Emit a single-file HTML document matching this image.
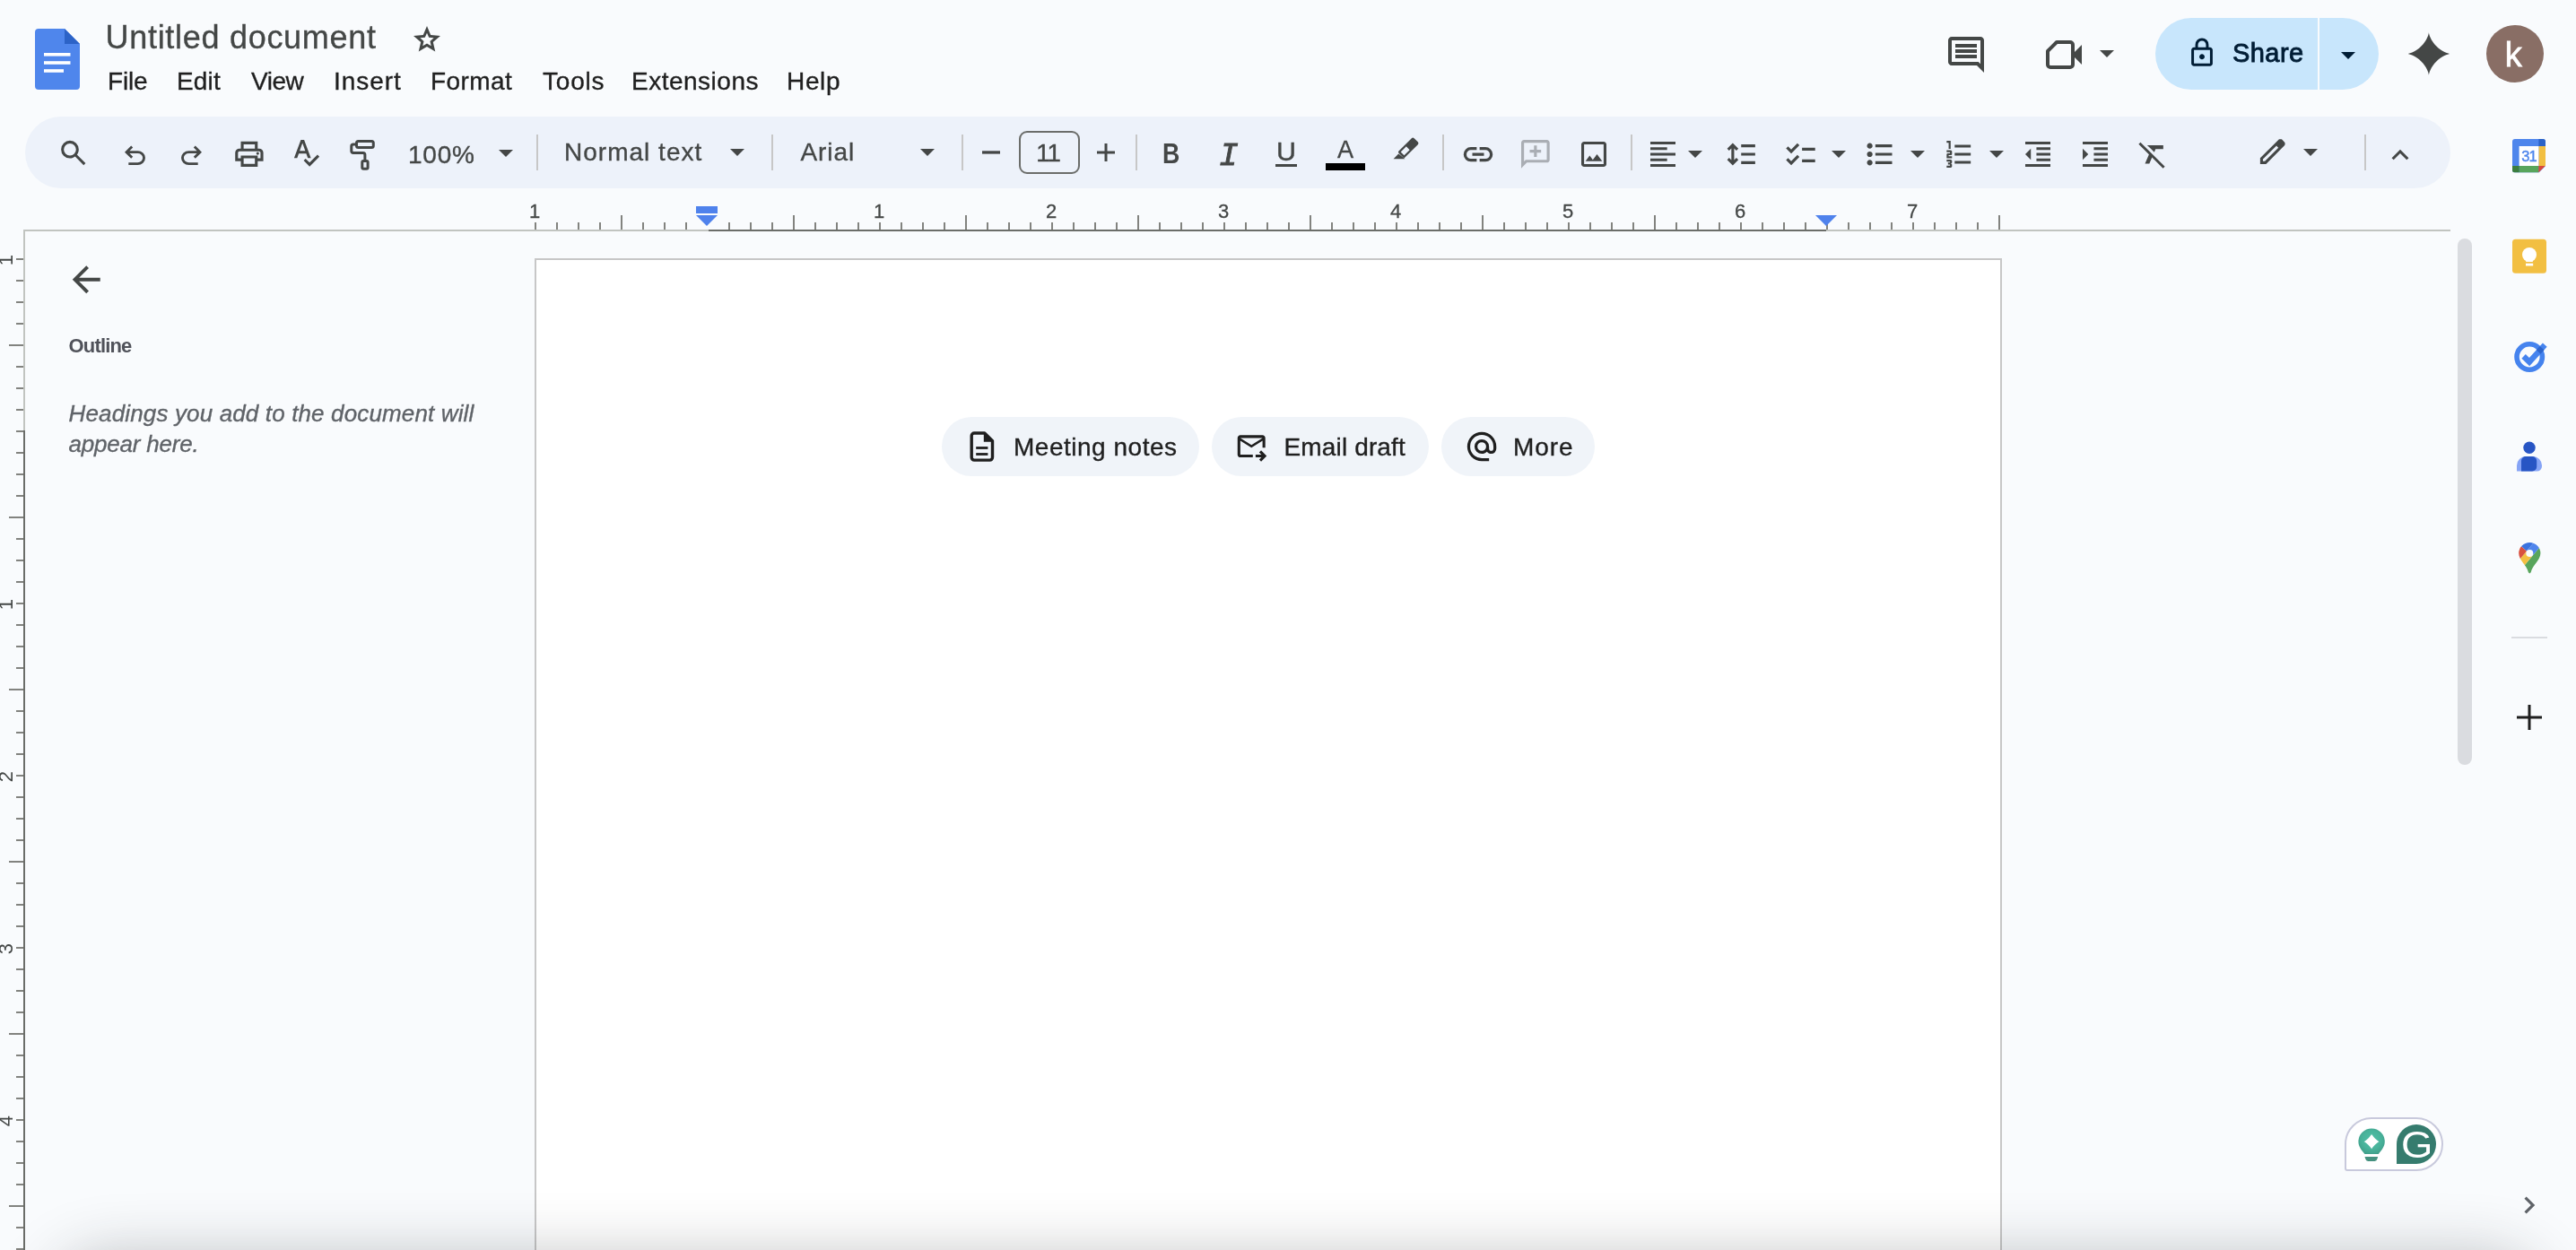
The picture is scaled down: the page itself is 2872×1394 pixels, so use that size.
<!DOCTYPE html>
<html lang="en">
<head>
<meta charset="utf-8">
<title>Untitled document - Google Docs</title>
<style>
html,body{margin:0;padding:0;}
html{background:#f9fbfd;overflow:hidden;}
body{width:2872px;height:1394px;overflow:hidden;background:#f9fbfd;position:relative;font-family:"Liberation Sans",sans-serif;}
.abs{position:absolute;}
.t{position:absolute;white-space:nowrap;line-height:1;}
#toolbar{left:28px;top:130px;width:2704px;height:80px;border-radius:40px;background:#edf2fa;}
.sep{position:absolute;width:2px;top:150px;height:40px;background:#c7c7c7;}
#page{left:596px;top:288px;width:1632px;height:1200px;background:#fff;border:2px solid #c7c7c7;}
.chip{position:absolute;top:465px;height:66px;border-radius:33px;background:#f0f4f9;}
#share{left:2403px;top:20px;width:249px;height:80px;border-radius:40px;background:#c8e6fc;}
#sharediv{left:2584px;top:20px;width:2px;height:80px;background:#f9fbfd;}
#avatar{left:2772px;top:28px;width:64px;height:64px;border-radius:50%;background:#896e65;}
#fsbox{left:1136px;top:146px;width:64px;height:44px;border:2px solid #6b6d6a;border-radius:9px;}
#scroll{left:2740px;top:266px;width:16px;height:587px;border-radius:8px;background:#dadce0;}
#gram{left:2614px;top:1246px;width:106px;height:56px;border:2px solid #c8c9dc;background:#fff;border-radius:30px 30px 30px 3px;}
#shadow{left:100px;top:1440px;width:2692px;height:100px;border-radius:20px;box-shadow:0 0 70px 36px rgba(30,32,36,0.30);}
#txt,#rul{position:absolute;left:0;top:0;width:2872px;height:1394px;will-change:transform;}
svg{position:absolute;left:0;top:0;overflow:visible;}
</style>
</head>
<body>
<div class="abs" id="toolbar"></div>
<div class="sep" style="left:598px"></div>
<div class="sep" style="left:860px"></div>
<div class="sep" style="left:1072px"></div>
<div class="sep" style="left:1266px"></div>
<div class="sep" style="left:1608px"></div>
<div class="sep" style="left:1818px"></div>
<div class="sep" style="left:2636px"></div>
<div class="abs" id="fsbox"></div>
<div class="abs" id="page"></div>
<div class="chip" style="left:1050px;width:287px"></div>
<div class="chip" style="left:1351px;width:242px"></div>
<div class="chip" style="left:1607px;width:171px"></div>
<div class="abs" id="share"></div>
<div class="abs" id="sharediv"></div>
<div class="abs" id="avatar"></div>
<div class="abs" id="scroll"></div>
<div class="abs" id="gram"></div>
<div id="rul">
<div class="abs" style="left:26px;top:256px;width:764px;height:2px;background:#c1c4c0"></div>
<div class="abs" style="left:790px;top:256px;width:1246px;height:2px;background:#6b6d69"></div>
<div class="abs" style="left:2036px;top:256px;width:696px;height:2px;background:#c1c4c0"></div>
<div class="abs" style="left:26px;top:258px;width:2px;height:222px;background:#c1c4c0"></div>
<div class="abs" style="left:26px;top:480px;width:2px;height:914px;background:#6b6d69"></div>
<div class="abs" style="left:596px;top:248px;width:2px;height:8px;background:#82837f"></div>
<div class="abs" style="left:620px;top:248px;width:2px;height:8px;background:#82837f"></div>
<div class="abs" style="left:644px;top:248px;width:2px;height:8px;background:#82837f"></div>
<div class="abs" style="left:668px;top:248px;width:2px;height:8px;background:#82837f"></div>
<div class="abs" style="left:692px;top:240px;width:2px;height:16px;background:#82837f"></div>
<div class="abs" style="left:716px;top:248px;width:2px;height:8px;background:#82837f"></div>
<div class="abs" style="left:740px;top:248px;width:2px;height:8px;background:#82837f"></div>
<div class="abs" style="left:764px;top:248px;width:2px;height:8px;background:#82837f"></div>
<div class="abs" style="left:812px;top:248px;width:2px;height:8px;background:#82837f"></div>
<div class="abs" style="left:836px;top:248px;width:2px;height:8px;background:#82837f"></div>
<div class="abs" style="left:860px;top:248px;width:2px;height:8px;background:#82837f"></div>
<div class="abs" style="left:884px;top:240px;width:2px;height:16px;background:#82837f"></div>
<div class="abs" style="left:908px;top:248px;width:2px;height:8px;background:#82837f"></div>
<div class="abs" style="left:932px;top:248px;width:2px;height:8px;background:#82837f"></div>
<div class="abs" style="left:956px;top:248px;width:2px;height:8px;background:#82837f"></div>
<div class="abs" style="left:980px;top:248px;width:2px;height:8px;background:#82837f"></div>
<div class="abs" style="left:1004px;top:248px;width:2px;height:8px;background:#82837f"></div>
<div class="abs" style="left:1028px;top:248px;width:2px;height:8px;background:#82837f"></div>
<div class="abs" style="left:1052px;top:248px;width:2px;height:8px;background:#82837f"></div>
<div class="abs" style="left:1076px;top:240px;width:2px;height:16px;background:#82837f"></div>
<div class="abs" style="left:1100px;top:248px;width:2px;height:8px;background:#82837f"></div>
<div class="abs" style="left:1124px;top:248px;width:2px;height:8px;background:#82837f"></div>
<div class="abs" style="left:1148px;top:248px;width:2px;height:8px;background:#82837f"></div>
<div class="abs" style="left:1172px;top:248px;width:2px;height:8px;background:#82837f"></div>
<div class="abs" style="left:1196px;top:248px;width:2px;height:8px;background:#82837f"></div>
<div class="abs" style="left:1220px;top:248px;width:2px;height:8px;background:#82837f"></div>
<div class="abs" style="left:1244px;top:248px;width:2px;height:8px;background:#82837f"></div>
<div class="abs" style="left:1268px;top:240px;width:2px;height:16px;background:#82837f"></div>
<div class="abs" style="left:1292px;top:248px;width:2px;height:8px;background:#82837f"></div>
<div class="abs" style="left:1316px;top:248px;width:2px;height:8px;background:#82837f"></div>
<div class="abs" style="left:1340px;top:248px;width:2px;height:8px;background:#82837f"></div>
<div class="abs" style="left:1364px;top:248px;width:2px;height:8px;background:#82837f"></div>
<div class="abs" style="left:1388px;top:248px;width:2px;height:8px;background:#82837f"></div>
<div class="abs" style="left:1412px;top:248px;width:2px;height:8px;background:#82837f"></div>
<div class="abs" style="left:1436px;top:248px;width:2px;height:8px;background:#82837f"></div>
<div class="abs" style="left:1460px;top:240px;width:2px;height:16px;background:#82837f"></div>
<div class="abs" style="left:1484px;top:248px;width:2px;height:8px;background:#82837f"></div>
<div class="abs" style="left:1508px;top:248px;width:2px;height:8px;background:#82837f"></div>
<div class="abs" style="left:1532px;top:248px;width:2px;height:8px;background:#82837f"></div>
<div class="abs" style="left:1556px;top:248px;width:2px;height:8px;background:#82837f"></div>
<div class="abs" style="left:1580px;top:248px;width:2px;height:8px;background:#82837f"></div>
<div class="abs" style="left:1604px;top:248px;width:2px;height:8px;background:#82837f"></div>
<div class="abs" style="left:1628px;top:248px;width:2px;height:8px;background:#82837f"></div>
<div class="abs" style="left:1652px;top:240px;width:2px;height:16px;background:#82837f"></div>
<div class="abs" style="left:1676px;top:248px;width:2px;height:8px;background:#82837f"></div>
<div class="abs" style="left:1700px;top:248px;width:2px;height:8px;background:#82837f"></div>
<div class="abs" style="left:1724px;top:248px;width:2px;height:8px;background:#82837f"></div>
<div class="abs" style="left:1748px;top:248px;width:2px;height:8px;background:#82837f"></div>
<div class="abs" style="left:1772px;top:248px;width:2px;height:8px;background:#82837f"></div>
<div class="abs" style="left:1796px;top:248px;width:2px;height:8px;background:#82837f"></div>
<div class="abs" style="left:1820px;top:248px;width:2px;height:8px;background:#82837f"></div>
<div class="abs" style="left:1844px;top:240px;width:2px;height:16px;background:#82837f"></div>
<div class="abs" style="left:1868px;top:248px;width:2px;height:8px;background:#82837f"></div>
<div class="abs" style="left:1892px;top:248px;width:2px;height:8px;background:#82837f"></div>
<div class="abs" style="left:1916px;top:248px;width:2px;height:8px;background:#82837f"></div>
<div class="abs" style="left:1940px;top:248px;width:2px;height:8px;background:#82837f"></div>
<div class="abs" style="left:1964px;top:248px;width:2px;height:8px;background:#82837f"></div>
<div class="abs" style="left:1988px;top:248px;width:2px;height:8px;background:#82837f"></div>
<div class="abs" style="left:2012px;top:248px;width:2px;height:8px;background:#82837f"></div>
<div class="abs" style="left:2036px;top:240px;width:2px;height:16px;background:#82837f"></div>
<div class="abs" style="left:2060px;top:248px;width:2px;height:8px;background:#82837f"></div>
<div class="abs" style="left:2084px;top:248px;width:2px;height:8px;background:#82837f"></div>
<div class="abs" style="left:2108px;top:248px;width:2px;height:8px;background:#82837f"></div>
<div class="abs" style="left:2132px;top:248px;width:2px;height:8px;background:#82837f"></div>
<div class="abs" style="left:2156px;top:248px;width:2px;height:8px;background:#82837f"></div>
<div class="abs" style="left:2180px;top:248px;width:2px;height:8px;background:#82837f"></div>
<div class="abs" style="left:2204px;top:248px;width:2px;height:8px;background:#82837f"></div>
<div class="abs" style="left:2228px;top:240px;width:2px;height:16px;background:#82837f"></div>
<div class="t" style="left:576px;top:225px;width:40px;text-align:center;font-size:22px;-webkit-text-stroke:0.3px #444746;color:#444746">1</div>
<div class="t" style="left:960px;top:225px;width:40px;text-align:center;font-size:22px;-webkit-text-stroke:0.3px #444746;color:#444746">1</div>
<div class="t" style="left:1152px;top:225px;width:40px;text-align:center;font-size:22px;-webkit-text-stroke:0.3px #444746;color:#444746">2</div>
<div class="t" style="left:1344px;top:225px;width:40px;text-align:center;font-size:22px;-webkit-text-stroke:0.3px #444746;color:#444746">3</div>
<div class="t" style="left:1536px;top:225px;width:40px;text-align:center;font-size:22px;-webkit-text-stroke:0.3px #444746;color:#444746">4</div>
<div class="t" style="left:1728px;top:225px;width:40px;text-align:center;font-size:22px;-webkit-text-stroke:0.3px #444746;color:#444746">5</div>
<div class="t" style="left:1920px;top:225px;width:40px;text-align:center;font-size:22px;-webkit-text-stroke:0.3px #444746;color:#444746">6</div>
<div class="t" style="left:2112px;top:225px;width:40px;text-align:center;font-size:22px;-webkit-text-stroke:0.3px #444746;color:#444746">7</div>
<div class="abs" style="left:18px;top:288px;width:8px;height:2px;background:#82837f"></div>
<div class="abs" style="left:18px;top:312px;width:8px;height:2px;background:#82837f"></div>
<div class="abs" style="left:18px;top:336px;width:8px;height:2px;background:#82837f"></div>
<div class="abs" style="left:18px;top:360px;width:8px;height:2px;background:#82837f"></div>
<div class="abs" style="left:10px;top:384px;width:16px;height:2px;background:#82837f"></div>
<div class="abs" style="left:18px;top:408px;width:8px;height:2px;background:#82837f"></div>
<div class="abs" style="left:18px;top:432px;width:8px;height:2px;background:#82837f"></div>
<div class="abs" style="left:18px;top:456px;width:8px;height:2px;background:#82837f"></div>
<div class="abs" style="left:18px;top:480px;width:8px;height:2px;background:#82837f"></div>
<div class="abs" style="left:18px;top:504px;width:8px;height:2px;background:#82837f"></div>
<div class="abs" style="left:18px;top:528px;width:8px;height:2px;background:#82837f"></div>
<div class="abs" style="left:18px;top:552px;width:8px;height:2px;background:#82837f"></div>
<div class="abs" style="left:10px;top:576px;width:16px;height:2px;background:#82837f"></div>
<div class="abs" style="left:18px;top:600px;width:8px;height:2px;background:#82837f"></div>
<div class="abs" style="left:18px;top:624px;width:8px;height:2px;background:#82837f"></div>
<div class="abs" style="left:18px;top:648px;width:8px;height:2px;background:#82837f"></div>
<div class="abs" style="left:18px;top:672px;width:8px;height:2px;background:#82837f"></div>
<div class="abs" style="left:18px;top:696px;width:8px;height:2px;background:#82837f"></div>
<div class="abs" style="left:18px;top:720px;width:8px;height:2px;background:#82837f"></div>
<div class="abs" style="left:18px;top:744px;width:8px;height:2px;background:#82837f"></div>
<div class="abs" style="left:10px;top:768px;width:16px;height:2px;background:#82837f"></div>
<div class="abs" style="left:18px;top:792px;width:8px;height:2px;background:#82837f"></div>
<div class="abs" style="left:18px;top:816px;width:8px;height:2px;background:#82837f"></div>
<div class="abs" style="left:18px;top:840px;width:8px;height:2px;background:#82837f"></div>
<div class="abs" style="left:18px;top:864px;width:8px;height:2px;background:#82837f"></div>
<div class="abs" style="left:18px;top:888px;width:8px;height:2px;background:#82837f"></div>
<div class="abs" style="left:18px;top:912px;width:8px;height:2px;background:#82837f"></div>
<div class="abs" style="left:18px;top:936px;width:8px;height:2px;background:#82837f"></div>
<div class="abs" style="left:10px;top:960px;width:16px;height:2px;background:#82837f"></div>
<div class="abs" style="left:18px;top:984px;width:8px;height:2px;background:#82837f"></div>
<div class="abs" style="left:18px;top:1008px;width:8px;height:2px;background:#82837f"></div>
<div class="abs" style="left:18px;top:1032px;width:8px;height:2px;background:#82837f"></div>
<div class="abs" style="left:18px;top:1056px;width:8px;height:2px;background:#82837f"></div>
<div class="abs" style="left:18px;top:1080px;width:8px;height:2px;background:#82837f"></div>
<div class="abs" style="left:18px;top:1104px;width:8px;height:2px;background:#82837f"></div>
<div class="abs" style="left:18px;top:1128px;width:8px;height:2px;background:#82837f"></div>
<div class="abs" style="left:10px;top:1152px;width:16px;height:2px;background:#82837f"></div>
<div class="abs" style="left:18px;top:1176px;width:8px;height:2px;background:#82837f"></div>
<div class="abs" style="left:18px;top:1200px;width:8px;height:2px;background:#82837f"></div>
<div class="abs" style="left:18px;top:1224px;width:8px;height:2px;background:#82837f"></div>
<div class="abs" style="left:18px;top:1248px;width:8px;height:2px;background:#82837f"></div>
<div class="abs" style="left:18px;top:1272px;width:8px;height:2px;background:#82837f"></div>
<div class="abs" style="left:18px;top:1296px;width:8px;height:2px;background:#82837f"></div>
<div class="abs" style="left:18px;top:1320px;width:8px;height:2px;background:#82837f"></div>
<div class="abs" style="left:10px;top:1344px;width:16px;height:2px;background:#82837f"></div>
<div class="abs" style="left:18px;top:1368px;width:8px;height:2px;background:#82837f"></div>
<div class="abs" style="left:18px;top:1392px;width:8px;height:2px;background:#82837f"></div>
<div class="t" style="left:-13px;top:279px;width:40px;height:22px;text-align:center;font-size:22px;color:#444746;transform:rotate(-90deg);transform-origin:50% 50%;">1</div>
<div class="t" style="left:-13px;top:663px;width:40px;height:22px;text-align:center;font-size:22px;color:#444746;transform:rotate(-90deg);transform-origin:50% 50%;">1</div>
<div class="t" style="left:-13px;top:855px;width:40px;height:22px;text-align:center;font-size:22px;color:#444746;transform:rotate(-90deg);transform-origin:50% 50%;">2</div>
<div class="t" style="left:-13px;top:1047px;width:40px;height:22px;text-align:center;font-size:22px;color:#444746;transform:rotate(-90deg);transform-origin:50% 50%;">3</div>
<div class="t" style="left:-13px;top:1239px;width:40px;height:22px;text-align:center;font-size:22px;color:#444746;transform:rotate(-90deg);transform-origin:50% 50%;">4</div>
</div>
<svg width="2872" height="1394" viewBox="0 0 2872 1394">
<g transform="translate(63.583 188.667) scale(0.03785)" fill="#444746"><path d="M784-120 532-372q-30 24-69 38t-83 14q-109 0-184.500-75.500T120-580q0-109 75.500-184.500T380-840q109 0 184.500 75.500T640-580q0 44-14 83t-38 69l252 252-56 56ZM380-400q75 0 127.500-52.500T560-580q0-75-52.500-127.500T380-760q-75 0-127.500 52.500T200-580q0 75 52.500 127.500T380-400Z"/></g>
<g transform="translate(133.275 191.193) scale(0.03589)" fill="#444746"><path d="M280-200v-80h284q63 0 109.500-40T720-420q0-60-46.500-100T564-560H312l104 104-56 56-200-200 200-200 56 56-104 104h252q97 0 166.500 63T800-420q0 94-69.500 157T564-200H280Z"/></g>
<g transform="translate(196.275 191.193) scale(0.03589)" fill="#444746"><path transform="translate(960,0) scale(-1,1)" d="M280-200v-80h284q63 0 109.500-40T720-420q0-60-46.500-100T564-560H312l104 104-56 56-200-200 200-200 56 56-104 104h252q97 0 166.500 63T800-420q0 94-69.500 157T564-200H280Z"/></g>
<g transform="translate(259.093 190.707) scale(0.03918)" fill="#444746"><path d="M640-640v-120H320v120h-80v-200h480v200h-80Zm-480 80h640-640Zm560 100q17 0 28.500-11.500T760-500q0-17-11.500-28.500T720-540q-17 0-28.500 11.500T680-500q0 17 11.500 28.500T720-460Zm-80 260v-160H320v160h320Zm80 80H240v-160H80v-240q0-51 35-85.500t85-34.500h560q51 0 85.500 34.500T880-520v240H720v160Zm80-240v-160q0-17-11.500-28.500T760-560H200q-17 0-28.500 11.500T160-520v160h80v-80h480v80h80Z"/></g>
<g transform="translate(323.217 188.789) scale(0.03889)" fill="#444746"><path d="M564-80 394-250l56-56 114 114 226-226 56 56L564-80ZM120-320l194-520h94l194 520h-88l-46-132H254l-46 132h-88Zm160-206h160l-78-220h-4l-78 220Z"/></g>
<g transform="translate(1628.5 191.75) scale(0.04063)" fill="#444746"><path d="M440-280H280q-83 0-141.500-58.500T80-480q0-83 58.500-141.500T280-680h160v80H280q-50 0-85 35t-35 85q0 50 35 85t85 35h160v80ZM320-440v-80h320v80H320Zm200 160v-80h160q50 0 85-35t35-85q0-50-35-85t-85-35H520v-80h160q83 0 141.500 58.500T880-480q0 83-58.500 141.500T680-280H520Z"/></g>
<g transform="translate(1692.83 190.87) scale(0.03963)" fill="#aaaeb4"><path d="M440-400h80v-120h120v-80H520v-120h-80v120H320v80h120v120ZM80-80v-720q0-33 23.500-56.500T160-880h640q33 0 56.500 23.500T880-800v480q0 33-23.500 56.500T800-240H240L80-80Zm126-240h594v-480H160v525l46-45Zm-46 0v-480 480Z"/></g>
<g transform="translate(1758.333 190.667) scale(0.03889)" fill="#444746"><path d="M200-120q-33 0-56.500-23.500T120-200v-560q0-33 23.500-56.500T200-840h560q33 0 56.500 23.500T840-760v560q0 33-23.500 56.500T760-120H200Zm0-80h560v-560H200v560Zm40-80h480L570-480 450-320l-90-120-120 160Zm-40 80v-560 560Z"/></g>
<g transform="translate(1835.333 190.667) scale(0.03889)" fill="#444746"><path d="M120-120v-80h720v80H120Zm0-160v-80h480v80H120Zm0-160v-80h720v80H120Zm0-160v-80h480v80H120Zm0-160v-80h720v80H120Z"/></g>
<g transform="translate(1922.5 190.75) scale(0.03906)" fill="#444746"><path d="M240-160 80-320l56-56 64 62v-332l-64 62-56-56 160-160 160 160-56 56-64-62v332l64-62 56 56-160 160Zm240-40v-80h400v80H480Zm0-240v-80h400v80H480Zm0-240v-80h400v80H480Z"/></g>
<g transform="translate(1988.048 192.324) scale(0.04053)" fill="#444746"><path d="M222-200 80-342l56-56 85 85 170-170 56 57-225 226Zm0-320L80-662l56-56 85 85 170-170 56 57-225 226Zm298 240v-80h360v80H520Zm0-320v-80h360v80H520Z"/></g>
<g transform="translate(2076.833 190.667) scale(0.03889)" fill="#444746"><path d="M360-200v-80h480v80H360Zm0-240v-80h480v80H360Zm0-240v-80h480v80H360ZM200-160q-33 0-56.500-23.500T120-240q0-33 23.500-56.500T200-320q33 0 56.500 23.500T280-240q0 33-23.500 56.500T200-160Zm0-240q-33 0-56.500-23.500T120-480q0-33 23.500-56.500T200-560q33 0 56.500 23.500T280-480q0 33-23.500 56.500T200-400Zm0-240q-33 0-56.500-23.500T120-720q0-33 23.500-56.500T200-800q33 0 56.500 23.500T280-720q0 33-23.500 56.500T200-640Z"/></g>
<g transform="translate(2165.85 189.9) scale(0.03729)" fill="#444746"><path d="M120-80v-60h100v-30h-60v-60h60v-30H120v-60h120q17 0 28.500 11.500T280-280v40q0 17-11.500 28.500T240-200q17 0 28.500 11.500T280-160v40q0 17-11.500 28.500T240-80H120Zm0-280v-110q0-17 11.500-28.500T160-510h60v-30H120v-60h120q17 0 28.500 11.500T280-560v70q0 17-11.500 28.500T240-450h-60v30h100v60H120Zm60-280v-180h-60v-60h120v240h-60Zm180 440v-80h480v80H360Zm0-240v-80h480v80H360Zm0-240v-80h480v80H360Z"/></g>
<g transform="translate(2253.333 190.667) scale(0.03889)" fill="#444746"><path d="M120-120v-80h720v80H120Zm320-160v-80h400v80H440Zm0-160v-80h400v80H440Zm0-160v-80h400v80H440ZM120-760v-80h720v80H120Zm160 440L120-480l160-160v320Z"/></g>
<g transform="translate(2317.333 190.667) scale(0.03889)" fill="#444746"><path d="M120-120v-80h720v80H120Zm320-160v-80h400v80H440Zm0-160v-80h400v80H440Zm0-160v-80h400v80H440ZM120-760v-80h720v80H120Zm0 440v-320l160 160-160 160Z"/></g>
<g transform="translate(2382.307 189.943) scale(0.03693)" fill="#444746"><path d="m528-546-93-93-121-121h486v120H568l-40 94ZM792-56 460-388l-80 188H249l119-280L56-792l56-56 736 736-56 56Z"/></g>
<g transform="translate(2515.25 187.5) scale(0.03854)" fill="#444746"><path d="M200-200h57l391-391-57-57-391 391v57Zm-80 80v-170l528-527q12-11 26.500-17t30.500-6q16 0 31 6t26 18l55 56q12 11 17.500 26t5.500 30q0 16-5.500 30.500T817-647L290-120H120Zm640-584-56-56 56 56Zm-141 85-28-29 57 57-29-28Z"/></g>
<g transform="translate(2657.081 191.931) scale(0.03941)" fill="#444746"><path d="m296-345-56-56 240-240 240 240-56 56-184-184-184 184Z"/></g>
<g transform="translate(458 62) scale(0.03750)" fill="#444746"><path d="m354-287 126-76 126 77-33-144 111-96-146-13-58-136-58 135-146 13 111 97-33 143ZM233-120l65-281L80-590l288-25 112-265 112 265 288 25-218 189 65 281-247-149-247 149Zm247-350Z"/></g>
<g transform="translate(2168 85) scale(0.05000)" fill="#444746"><path d="M240-400h480v-80H240v80Zm0-120h480v-80H240v80Zm0-120h480v-80H240v80ZM880-80 720-240H160q-33 0-56.500-23.500T80-320v-480q0-33 23.500-56.500T160-880h640q33 0 56.500 23.500T880-800v720ZM160-320h594l46 45v-525H160v480Zm0 0v-480 480Z"/></g>
<g transform="translate(2437.171 76.621) scale(0.03714)" fill="#001d35"><path d="M240-80q-33 0-56.500-23.500T160-160v-400q0-33 23.500-56.500T240-640h40v-80q0-83 58.500-141.500T480-920q83 0 141.500 58.500T680-720v80h40q33 0 56.500 23.500T800-560v400q0 33-23.500 56.500T720-80H240Zm0-80h480v-400H240v400Zm240-120q33 0 56.500-23.500T560-360q0-33-23.500-56.500T480-440q-33 0-56.500 23.500T400-360q0 33 23.500 56.500T480-280ZM360-640h240v-80q0-50-35-85t-85-35q-50 0-85 35t-35 85v80ZM240-160v-400 400Z"/></g>
<g transform="translate(73.038 335.012) scale(0.04836)" fill="#444746"><path d="m313-440 224 224-57 56-320-320 320-320 57 56-224 224h487v80H313Z"/></g>
<g transform="translate(1376.67 516.237) scale(0.03866)" fill="#1f1f1f"><path d="M480-440 160-640v400h360v80H160q-33 0-56.500-23.500T80-240v-480q0-33 23.500-56.500T160-800h640q33 0 56.500 23.500T880-720v280h-80v-200L480-440Zm0-80 320-200H160l320 200ZM760-40l-56-56 63-64H600v-80h167l-64-64 57-56 160 160L760-40Z"/></g>
<g transform="translate(1632.58 517.47) scale(0.04056)" fill="#1f1f1f"><path d="M480-80q-83 0-156-31.500T197-197q-54-54-85.500-127T80-480q0-83 31.500-156T197-763q54-54 127-85.500T480-880q83 0 156 31.500T763-763q54 54 85.500 127T880-480v58q0 59-40.500 100.500T740-280q-35 0-66-15t-52-43q-29 29-65.500 43.500T480-280q-83 0-141.500-58.500T280-480q0-83 58.500-141.500T480-680q83 0 141.500 58.500T680-480v58q0 26 17 44t43 18q26 0 43-18t17-44v-58q0-134-93-227t-227-93q-134 0-227 93t-93 227q0 134 93 227t227 93h200v80H480Zm0-280q50 0 85-35t35-85q0-50-35-85t-85-35q-50 0-85 35t-35 85q0 50 35 85t85 35Z"/></g>
<g transform="translate(2801.667 1363.162) scale(0.03992)" fill="#5f6368"><path d="M504-480 320-664l56-56 240 240-240 240-56-56 184-184Z"/></g>
<!-- docs logo -->
<path d="M43 32h29l17 17v47a4 4 0 0 1-4 4h-42a4 4 0 0 1-4-4v-60a4 4 0 0 1 4-4z" fill="#4f86ec"/>
<path d="M72 32l17 17h-17z" fill="#2c63c7"/>
<rect x="49" y="59" width="29.5" height="3.6" fill="#fff"/><rect x="49" y="68.2" width="29.5" height="3.6" fill="#fff"/><rect x="49" y="77.2" width="22" height="3.6" fill="#fff"/>
<!-- dropdown arrows -->
<g fill="#444746">
<path d="M556 167h16l-8 8z"/><path d="M814 166h16l-8 8z"/><path d="M1026 166h16l-8 8z"/>
<path d="M1882 168h16l-8 8z"/><path d="M2042 168h16l-8 8z"/><path d="M2130 168h16l-8 8z"/><path d="M2218 168h16l-8 8z"/>
<path d="M2568 166h16l-8 8z"/><path d="M2341 56h16l-8 8z"/>
<rect x="1095" y="168.300" width="20" height="3.300"/>
<rect x="1223" y="168.5" width="20" height="3"/><rect x="1231.500" y="160" width="3" height="20"/>
</g>
<path d="M2610 58h16l-8 8z" fill="#001d35"/>
<rect x="1478" y="182" width="44" height="8" fill="#000"/>
<!-- underline for U -->
<rect x="1422" y="183" width="24" height="3" fill="#444746"/>
<!-- paint roller -->
<g fill="none" stroke="#444746" stroke-width="3" stroke-linejoin="round">
<rect x="397.500" y="157.500" width="18.800" height="7" rx="2"/>
<path d="M397.500 161h-3.500a2.200 2.200 0 0 0-2.200 2.200v5a2.200 2.200 0 0 0 2.200 2.200h10.700a2.200 2.200 0 0 1 2.200 2.200v5.500"/>
<rect x="403.800" y="179.500" width="6.300" height="8.700" rx="1.500"/>
</g>
<!-- highlighter -->
<g fill="#444746">
<path d="M1553.600 177.200L1559.200 171.400L1566.500 177.200z"/>
<g transform="translate(1570.300 164.700) rotate(-45)"><path d="M-10.400 -4.950h20.300a2 2 0 0 1 2 2v5.900a2 2 0 0 1-2 2h-20.300a1.500 1.500 0 0 1-1.500-1.500v-6.900a1.500 1.500 0 0 1 1.500-1.500zM-9.500 -2.700v5.400h8.700v-5.400z" fill-rule="evenodd"/></g>
</g>
<!-- video -->
<path d="M2283 57l10-10h15a3 3 0 0 1 3 3v22a3 3 0 0 1-3 3h-22a3 3 0 0 1-3-3z" fill="none" stroke="#444746" stroke-width="4" stroke-linejoin="round"/>
<path d="M2313 58l8-8v22l-8-8z" fill="#444746"/>
<!-- gemini spark -->
<path d="M2732.1 60.0L2731.8 60.0L2731.0 60.1L2729.7 60.4L2727.9 60.9L2725.9 61.8L2723.5 63.0L2721.1 64.5L2718.7 66.3L2716.4 68.5L2714.2 70.8L2712.4 73.2L2710.9 75.6L2709.7 78.0L2708.8 80.0L2708.3 81.8L2708.0 83.1L2707.9 83.9L2707.9 84.2L2707.9 83.9L2707.8 83.1L2707.5 81.8L2707.0 80.0L2706.1 78.0L2704.9 75.6L2703.4 73.2L2701.6 70.8L2699.4 68.5L2697.1 66.3L2694.7 64.5L2692.3 63.0L2689.9 61.8L2687.9 60.9L2686.1 60.4L2684.8 60.1L2684.0 60.0L2683.7 60.0L2684.0 60.0L2684.8 59.9L2686.1 59.6L2687.9 59.1L2689.9 58.2L2692.3 57.0L2694.7 55.5L2697.1 53.7L2699.4 51.5L2701.6 49.2L2703.4 46.8L2704.9 44.4L2706.1 42.0L2707.0 40.0L2707.5 38.2L2707.8 36.9L2707.9 36.1L2707.9 35.8L2707.9 36.1L2708.0 36.9L2708.3 38.2L2708.8 40.0L2709.7 42.0L2710.9 44.4L2712.4 46.8L2714.2 49.2L2716.4 51.5L2718.7 53.7L2721.1 55.5L2723.5 57.0L2725.9 58.2L2727.9 59.1L2729.7 59.6L2731.0 59.9L2731.8 60.0Z" fill="#444746"/>
<!-- indent markers -->
<g fill="#4f82ec"><rect x="776" y="230" width="24" height="8"/><path d="M776 240h24l-12 12z"/><path d="M2024 240h24l-12 12z"/></g>
<!-- side panel -->
<rect x="2800" y="710" width="40" height="2" fill="#dadce0"/>
<g fill="#1f1f1f"><rect x="2806" y="798.500" width="28" height="3"/><rect x="2818.500" y="786" width="3" height="28"/></g>
<!-- calendar -->
<defs>
<clipPath id="calclip"><path d="M2804 155h31a3 3 0 0 1 3 3v27l-7.500 7.500h-26.500a3 3 0 0 1-3-3v-31.500a3 3 0 0 1 3-3z"/></clipPath>
<clipPath id="pinclip"><path d="M2808.200 617.100A12.100 12.100 0 1 1 2832.400 617.100C2832.400 625 2823.500 630 2821.700 638.300Q2820.300 640.600 2818.900 638.300C2817.100 630 2808.200 625 2808.200 617.100Z"/></clipPath>
<radialGradient id="bulbg" cx="0.5" cy="0.45" r="0.6"><stop offset="0" stop-color="#4fbfa6"/><stop offset="0.6" stop-color="#49b39b"/><stop offset="1" stop-color="#3f9d88"/></radialGradient>
</defs>
<g clip-path="url(#calclip)">
<rect x="2801" y="155" width="37" height="37.500" fill="#4f86ec"/>
<rect x="2830.400" y="155" width="7.600" height="8" fill="#2c63c7"/>
<rect x="2830.400" y="163" width="7.600" height="22" fill="#f2bf42"/>
<rect x="2808.600" y="185" width="21.800" height="7.500" fill="#58a55c"/>
<rect x="2801" y="185" width="7.600" height="7.500" fill="#3b7d3f"/>
<path d="M2830.400 185h7.600l-7.600 7.500z" fill="#d9483b"/>
<rect x="2808.600" y="163" width="21.800" height="22" fill="#fff"/>
</g>
<!-- keep -->
<rect x="2801" y="266.800" width="38" height="38" rx="3.500" fill="#f2bf42"/>
<circle cx="2820" cy="284" r="8" fill="#fff"/><rect x="2816.200" y="288" width="7.600" height="4" fill="#fff"/><rect x="2816" y="293.700" width="8.200" height="2.800" fill="#fff"/>
<!-- tasks -->
<circle cx="2820.200" cy="398" r="14.200" fill="none" stroke="#4583ee" stroke-width="5.600"/>
<path d="M2813.600 397.400L2820 403.600L2837.300 384.700" fill="none" stroke="#4583ee" stroke-width="6.400" stroke-linejoin="miter"/>
<path d="M2830.200 392.500L2834.100 388.200" fill="none" stroke="#2d65cc" stroke-width="6.400"/>
<!-- contacts -->
<circle cx="2820" cy="499.300" r="6.700" fill="#2755c4"/>
<path d="M2806 525.500v-6.500a10 10 0 0 1 10-10h8a10 10 0 0 1 10 10v1a5.500 5.500 0 0 1-5.500 5.500z" fill="#86a4f6"/>
<path d="M2811 525.500v-11.500a5 5 0 0 1 5-5h7.200a5 5 0 0 1 5 5v6.500a5 5 0 0 1-5 5z" fill="#2755c4"/>
<!-- maps -->
<g clip-path="url(#pinclip)"><g transform="translate(2820.300 617.100) rotate(-50)">
<rect x="-40" y="4.200" width="80" height="40" fill="#58a55c"/>
<rect x="-40" y="-4.200" width="40" height="8.400" fill="#f2bf42"/><rect x="0" y="-4.200" width="40" height="8.400" fill="#5085ec"/>
<rect x="-40" y="-40" width="40" height="35.800" fill="#d9513f"/><rect x="0" y="-40" width="40" height="35.800" fill="#3b73df"/>
</g></g>
<circle cx="2820.300" cy="617.100" r="4" fill="#f9fbfd"/>
<!-- doc icon chip -->
<path d="M1083.200 486a3 3 0 0 1 3-3h11.500l8.800 8.800v18.300a3 3 0 0 1-3 3h-17.300a3 3 0 0 1-3-3z" fill="none" stroke="#1f1f1f" stroke-width="3.400" stroke-linejoin="round"/>
<path d="M1096.800 483v9.800h9.800z" fill="#1f1f1f"/>
<rect x="1088.200" y="498.100" width="13.200" height="2.800" fill="#1f1f1f"/><rect x="1088.200" y="505.100" width="13.200" height="2.800" fill="#1f1f1f"/>
<!-- grammarly -->
<path d="M2644.100 1258.400a14.700 14.700 0 0 1 14.700 14.700c0 6-3.500 9.500-7 13.800h-15.400c-3.500-4.300-7-7.800-7-13.800a14.700 14.700 0 0 1 14.700-14.700z" fill="url(#bulbg)"/>
<path d="M2636.500 1290h14.700l-.8 2.600a3 3 0 0 1-2.900 2.300h-7.300a3 3 0 0 1-2.900-2.300z" fill="#45917f"/>
<path d="M2652.5 1273.1L2652.3 1273.2L2651.8 1273.4L2651.1 1274.0L2650.1 1274.7L2649.0 1275.7L2647.8 1276.8L2646.7 1278.0L2645.7 1279.1L2645.0 1280.1L2644.4 1280.8L2644.2 1281.3L2644.1 1281.5L2644.0 1281.3L2643.8 1280.8L2643.2 1280.1L2642.5 1279.1L2641.5 1278.0L2640.4 1276.8L2639.2 1275.7L2638.1 1274.7L2637.1 1274.0L2636.4 1273.4L2635.9 1273.2L2635.7 1273.1L2635.9 1273.0L2636.4 1272.8L2637.1 1272.2L2638.1 1271.5L2639.2 1270.5L2640.4 1269.4L2641.5 1268.2L2642.5 1267.1L2643.2 1266.1L2643.8 1265.4L2644.0 1264.9L2644.1 1264.7L2644.2 1264.9L2644.4 1265.4L2645.0 1266.1L2645.7 1267.1L2646.7 1268.2L2647.8 1269.4L2649.0 1270.5L2650.1 1271.5L2651.1 1272.2L2651.8 1272.8L2652.3 1273.0Z" fill="#fff"/>
<path d="M2672 1298v-22a22 22 0 1 1 22 22z" fill="#367c6e"/>

</svg>
<div id="txt">
<div class="t" style="left:117.5px;top:23.5px;font-size:36px;font-weight:400;font-style:normal;color:#444746;letter-spacing:0.709px;font-family:'Liberation Sans', sans-serif;-webkit-text-stroke:0.35px currentColor;">Untitled document</div>
<div class="t" style="left:120px;top:77.25px;font-size:28px;font-weight:400;font-style:normal;color:#1f1f1f;letter-spacing:-0.182px;font-family:'Liberation Sans', sans-serif;-webkit-text-stroke:0.35px currentColor;">File</div>
<div class="t" style="left:197px;top:77.25px;font-size:28px;font-weight:400;font-style:normal;color:#1f1f1f;letter-spacing:0.177px;font-family:'Liberation Sans', sans-serif;-webkit-text-stroke:0.35px currentColor;">Edit</div>
<div class="t" style="left:280px;top:77.25px;font-size:28px;font-weight:400;font-style:normal;color:#1f1f1f;letter-spacing:-0.488px;font-family:'Liberation Sans', sans-serif;-webkit-text-stroke:0.35px currentColor;">View</div>
<div class="t" style="left:372px;top:77.25px;font-size:28px;font-weight:400;font-style:normal;color:#1f1f1f;letter-spacing:0.95px;font-family:'Liberation Sans', sans-serif;-webkit-text-stroke:0.35px currentColor;">Insert</div>
<div class="t" style="left:480px;top:77.25px;font-size:28px;font-weight:400;font-style:normal;color:#1f1f1f;letter-spacing:0.421px;font-family:'Liberation Sans', sans-serif;-webkit-text-stroke:0.35px currentColor;">Format</div>
<div class="t" style="left:605px;top:77.25px;font-size:28px;font-weight:400;font-style:normal;color:#1f1f1f;letter-spacing:0.784px;font-family:'Liberation Sans', sans-serif;-webkit-text-stroke:0.35px currentColor;">Tools</div>
<div class="t" style="left:704px;top:77.25px;font-size:28px;font-weight:400;font-style:normal;color:#1f1f1f;letter-spacing:0.504px;font-family:'Liberation Sans', sans-serif;-webkit-text-stroke:0.35px currentColor;">Extensions</div>
<div class="t" style="left:877px;top:77.25px;font-size:28px;font-weight:400;font-style:normal;color:#1f1f1f;letter-spacing:0.662px;font-family:'Liberation Sans', sans-serif;-webkit-text-stroke:0.35px currentColor;">Help</div>
<div class="t" style="left:455px;top:158.5px;font-size:28px;font-weight:400;font-style:normal;color:#444746;letter-spacing:0.761px;font-family:'Liberation Sans', sans-serif;-webkit-text-stroke:0.35px currentColor;">100%</div>
<div class="t" style="left:629px;top:155.5px;font-size:28px;font-weight:400;font-style:normal;color:#444746;letter-spacing:1.013px;font-family:'Liberation Sans', sans-serif;-webkit-text-stroke:0.35px currentColor;">Normal text</div>
<div class="t" style="left:892.5px;top:155.5px;font-size:28px;font-weight:400;font-style:normal;color:#444746;letter-spacing:0.927px;font-family:'Liberation Sans', sans-serif;-webkit-text-stroke:0.35px currentColor;">Arial</div>
<div class="t" style="left:1155.323px;top:156.75px;font-size:27.5px;font-weight:400;font-style:normal;color:#444746;letter-spacing:-1px;font-family:'Liberation Sans', sans-serif;-webkit-text-stroke:0.5px #444746;">11</div>
<div class="t" style="left:2489px;top:44.5px;font-size:29px;font-weight:400;font-style:normal;color:#001d35;letter-spacing:0.436px;font-family:'Liberation Sans', sans-serif;-webkit-text-stroke:0.9px #001d35;">Share</div>
<div class="t" style="left:2792.85px;top:42.2px;font-size:38px;font-weight:400;font-style:normal;color:#ffffff;letter-spacing:0px;font-family:'Liberation Sans', sans-serif;-webkit-text-stroke:0.8px #fff;">k</div>
<div class="t" style="left:76.6px;top:374.5px;font-size:22px;font-weight:700;font-style:normal;color:#50525a;letter-spacing:-0.857px;font-family:'Liberation Sans', sans-serif;">Outline</div>
<div class="t" style="left:76.6px;top:448px;font-size:26px;font-weight:400;font-style:italic;color:#5f6368;letter-spacing:0.141px;font-family:'Liberation Sans', sans-serif;-webkit-text-stroke:0.35px currentColor;">Headings you add to the document will</div>
<div class="t" style="left:76.6px;top:482px;font-size:26px;font-weight:400;font-style:italic;color:#5f6368;letter-spacing:-0.211px;font-family:'Liberation Sans', sans-serif;-webkit-text-stroke:0.35px currentColor;">appear here.</div>
<div class="t" style="left:1130px;top:484.5px;font-size:28px;font-weight:400;font-style:normal;color:#1f1f1f;letter-spacing:0.509px;font-family:'Liberation Sans', sans-serif;-webkit-text-stroke:0.35px currentColor;">Meeting notes</div>
<div class="t" style="left:1431.5px;top:484.5px;font-size:28px;font-weight:400;font-style:normal;color:#1f1f1f;letter-spacing:0.146px;font-family:'Liberation Sans', sans-serif;-webkit-text-stroke:0.35px currentColor;">Email draft</div>
<div class="t" style="left:1687px;top:484.5px;font-size:28px;font-weight:400;font-style:normal;color:#1f1f1f;letter-spacing:0.926px;font-family:'Liberation Sans', sans-serif;-webkit-text-stroke:0.35px currentColor;">More</div>
<div class="t" style="left:1296.074px;top:156px;font-size:31px;font-weight:700;font-style:normal;color:#444746;letter-spacing:0px;font-family:'Liberation Sans', sans-serif;transform:scaleX(0.8632);transform-origin:0 0;">B</div>
<div class="t" style="left:1359px;top:156.5px;font-size:36px;font-weight:400;font-style:italic;color:#444746;letter-spacing:0px;font-family:'Liberation Mono', monospace;transform:scaleX(1.0000);transform-origin:0 0;-webkit-text-stroke:0.9px #444746;">I</div>
<div class="t" style="left:1422.667px;top:154.25px;font-size:30px;font-weight:400;font-style:normal;color:#444746;letter-spacing:0px;font-family:'Liberation Sans', sans-serif;transform:scaleX(1.0167);transform-origin:0 0;-webkit-text-stroke:0.4px #444746;">U</div>
<div class="t" style="left:1490.8px;top:153.4px;font-size:28px;font-weight:400;font-style:normal;color:#444746;letter-spacing:0px;font-family:'Liberation Sans', sans-serif;transform:scaleX(0.9684);transform-origin:0 0;-webkit-text-stroke:0.3px #444746;">A</div>
<div class="t" style="left:2811.362px;top:166.05px;font-size:16.5px;font-weight:400;font-style:normal;color:#4f86ec;letter-spacing:-1px;font-family:'Liberation Sans', sans-serif;-webkit-text-stroke:0.4px #4f86ec;">31</div>
<div class="t" style="left:2676.583px;top:1255px;font-size:43px;font-weight:400;font-style:normal;color:#ffffff;letter-spacing:0px;font-family:'Liberation Sans', sans-serif;transform:scaleX(1.0586);transform-origin:0 0;">G</div>
</div>
<div class="abs" id="shadow"></div>
<script>(function(){var w=document.documentElement.clientWidth;if(w&&Math.abs(w-2872)>40){document.body.style.zoom=w/2872;}})();</script>
</body>
</html>
